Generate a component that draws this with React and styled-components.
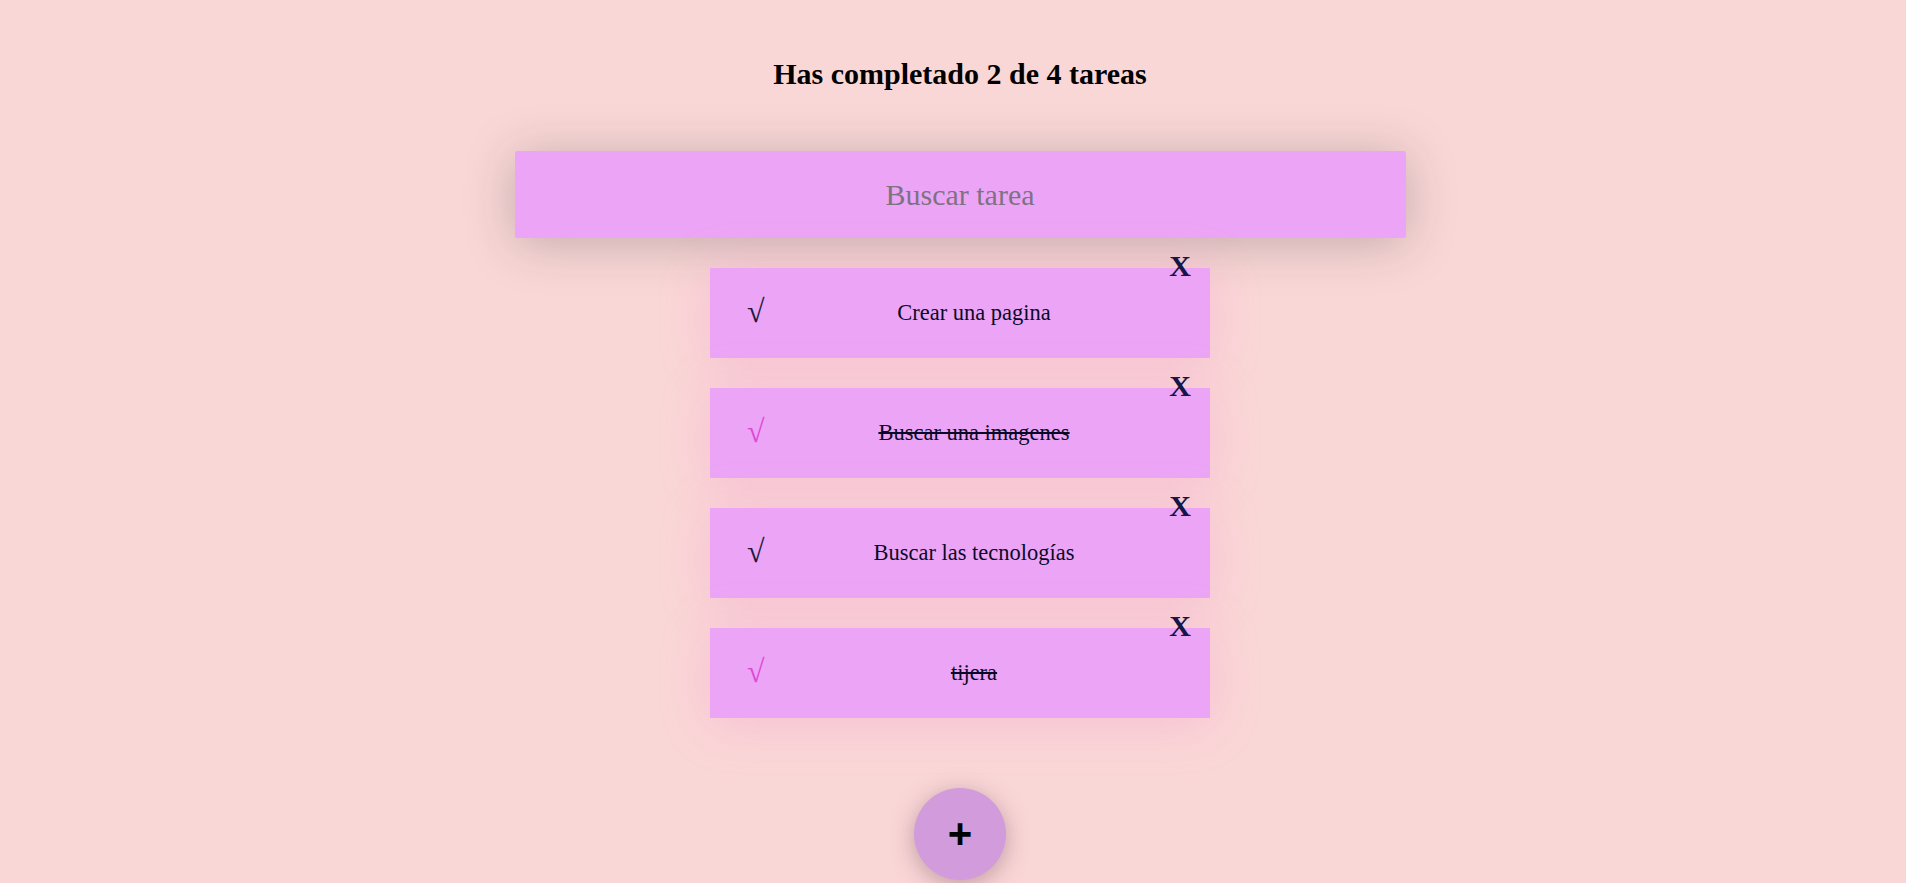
import React from 'react';
import styled, { createGlobalStyle } from 'styled-components';

const todos = [
  { id: 1, text: 'Crear una pagina', completed: false },
  { id: 2, text: 'Buscar una imagenes', completed: true },
  { id: 3, text: 'Buscar las tecnologías', completed: false },
  { id: 4, text: 'tijera', completed: true },
];

const GlobalStyle = createGlobalStyle`
  body {
    margin: 0;
    background: #fad7d7;
    font-family: "Liberation Serif", "Times New Roman", serif;
    overflow: hidden;
  }
`;

function App() {
  const done = todos.filter((t) => t.completed).length;

  return (
    <Page>
      <GlobalStyle />
      <Title>
        Has completado {done} de {todos.length} tareas
      </Title>
      <SearchInput placeholder="Buscar tarea" />
      <List>
        {todos.map(({ id, text, completed }) => (
          <Item key={id}>
            <Check $done={completed}>√</Check>
            <ItemText $done={completed}>{text}</ItemText>
            <Delete>X</Delete>
          </Item>
        ))}
      </List>
      <AddButton>+</AddButton>
    </Page>
  );
}

export default App;

const Page = styled.div`
  display: flex;
  flex-direction: column;
  align-items: center;
  min-height: 100vh;
  padding: 56px 0 0 14px;
  box-sizing: border-box;
`;

const Title = styled.h1`
  margin: 0 0 60px;
  font-size: 30px;
  line-height: 35px;
  font-weight: bold;
  color: #000;
`;

const SearchInput = styled.input`
  width: 891px;
  height: 87px;
  box-sizing: border-box;
  border: none;
  border-radius: 2px;
  background: #eca5f6;
  box-shadow: 0px 5px 50px rgba(32, 35, 41, 0.25);
  font-family: "Liberation Serif", "Times New Roman", serif;
  font-size: 30px;
  text-align: center;
  color: #000;
  outline: none;

  &::placeholder {
    color: #7d7282;
  }
`;

const List = styled.ul`
  display: flex;
  flex-direction: column;
  gap: 30px;
  margin: 30px 0 0;
  padding: 0;
  list-style: none;
`;

const Item = styled.li`
  position: relative;
  display: flex;
  align-items: center;
  width: 500px;
  height: 90px;
  box-sizing: border-box;
  padding: 0 25px 0 37px;
  background: #eca5f6;
  box-shadow: 0px 5px 50px rgba(240, 120, 200, 0.25);
`;

const Check = styled.span`
  width: 16px;
  font-size: 32px;
  line-height: 1;
  margin-top: -4px;
  color: ${(p) => (p.$done ? '#e048d6' : '#1a1a3e')};
`;

const ItemText = styled.p`
  flex: 1;
  margin: 0;
  text-align: center;
  font-size: 22.5px;
  color: #0a0a28;
  text-decoration: ${(p) => (p.$done ? 'line-through' : 'none')};
`;

const Delete = styled.span`
  position: absolute;
  top: -17px;
  right: 19px;
  font-size: 30px;
  font-weight: bold;
  line-height: 1;
  color: #15154a;
  cursor: pointer;
`;

const AddButton = styled.button`
  width: 92px;
  height: 92px;
  margin-top: 70px;
  border: none;
  border-radius: 50%;
  background: #d19bdc;
  box-shadow: 0px 5px 25px rgba(80, 40, 60, 0.35);
  font-family: "Liberation Sans", Arial, sans-serif;
  font-size: 42px;
  font-weight: bold;
  color: #000;
  display: flex;
  align-items: center;
  justify-content: center;
  padding: 0;
  cursor: pointer;
`;
